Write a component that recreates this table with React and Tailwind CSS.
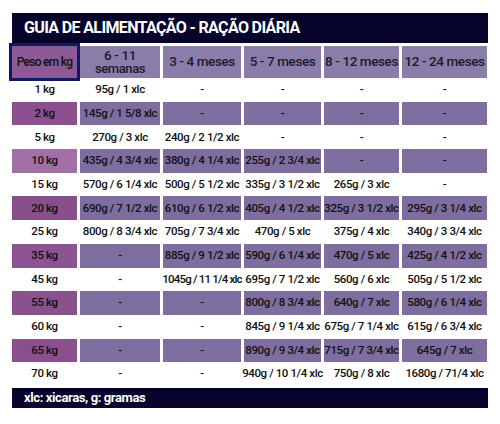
const headers = ["6 - 11", "3 - 4 meses", "5 - 7 meses", "8 - 12 meses", "12 - 24 meses"];

const rows = [
  { kg: "1 kg", cells: ["95g / 1 xlc", "-", "-", "-", "-"] },
  { kg: "2 kg", tint: "bg-[#8b4f8f]", cells: ["145g / 1 5/8 xlc", "-", "-", "-", "-"] },
  { kg: "5 kg", cells: ["270g / 3 xlc", "240g / 2 1/2 xlc", "-", "-", "-"] },
  { kg: "10 kg", tint: "bg-[#a270a7]", cells: ["435g / 4 3/4 xlc", "380g / 4 1/4 xlc", "255g / 2 3/4 xlc", "-", "-"] },
  { kg: "15 kg", cells: ["570g / 6 1/4 xlc", "500g / 5 1/2 xlc", "335g / 3 1/2 xlc", "265g / 3 xlc", "-"] },
  { kg: "20 kg", tint: "bg-[#894f8d]", cells: ["690g / 7 1/2 xlc", "610g / 6 1/2 xlc", "405g / 4 1/2 xlc", "325g / 3 1/2 xlc", "295g / 3 1/4 xlc"] },
  { kg: "25 kg", cells: ["800g / 8 3/4 xlc", "705g / 7 3/4 xlc", "470g / 5 xlc", "375g / 4 xlc", "340g / 3 3/4 xlc"] },
  { kg: "35 kg", tint: "bg-[#8b5391]", cells: ["-", "885g / 9 1/2 xlc", "590g / 6 1/4 xlc", "470g / 5 xlc", "425g / 4 1/2 xlc"] },
  { kg: "45 kg", cells: ["-", "1045g / 11 1/4 xlc", "695g / 7 1/2 xlc", "560g / 6 xlc", "505g / 5 1/2 xlc"] },
  { kg: "55 kg", tint: "bg-[#89528e]", cells: ["-", "-", "800g / 8 3/4 xlc", "640g / 7 xlc", "580g / 6 1/4 xlc"] },
  { kg: "60 kg", cells: ["-", "-", "845g / 9 1/4 xlc", "675g / 7 1/4 xlc", "615g / 6 3/4 xlc"] },
  { kg: "65 kg", tint: "bg-[#8a508d]", cells: ["-", "-", "890g / 9 3/4 xlc", "715g / 7 3/4 xlc", "645g / 7 xlc"] },
  { kg: "70 kg", cells: ["-", "-", "940g / 10 1/4 xlc", "750g / 8 xlc", "1680g / 71/4 xlc"] },
];

const font = { fontFamily: "Roboto, 'Open Sans', sans-serif" };

export default function App() {
  return (
    <div className="w-[500px] h-[424px] bg-white pt-[13px] pl-[12px]" style={font}>
      <div className="w-[476px] h-[30px] bg-[#06042a] flex items-center pl-[12px] text-white font-bold text-[16px] tracking-[-0.04em]">
        GUIA DE ALIMENTAÇÃO - RAÇÃO DIÁRIA
      </div>

      <div className="mt-[3px] grid grid-cols-[65px_80px_78px_77px_75px_85px] gap-x-[3px] text-[11.5px] font-medium tracking-[-0.035em] text-[#111]">
        <div className="h-[32px] bg-[#8e5a95] outline-[3px] outline-[#0c1a6b] flex items-center justify-center text-[12px] tracking-[-0.06em]">
          Peso em kg
        </div>
        {headers.map((h, i) => (
          <div key={h} className="h-[32px] bg-[#8a7daa] flex flex-col items-center justify-center text-[13.5px] leading-[13.5px] text-[#1a1a2a]">
            <span>{h}</span>
            {i === 0 && <span className="text-[13px]">semanas</span>}
          </div>
        ))}

        {rows.map((r) => (
          <Row key={r.kg} row={r} />
        ))}
      </div>

      <div className="mt-[2px] w-[476px] h-[20px] bg-[#06042a] flex items-center pl-[12px] text-white font-bold text-[13px] tracking-[-0.03em]">
        xlc: xicaras, g: gramas
      </div>
    </div>
  );
}

function Row({ row }) {
  const purple = Boolean(row.tint);
  return (
    <>
      <div className={`h-[23.7px] flex items-center justify-center ${purple ? row.tint : ""}`}>{row.kg}</div>
      {row.cells.map((c, i) => (
        <div
          key={i}
          className={`h-[23.7px] flex items-center justify-center whitespace-nowrap ${purple ? "bg-[#7d6e9f]" : ""} ${c.length > 17 ? "tracking-[-0.07em]" : ""}`}
        >
          {c}
        </div>
      ))}
    </>
  );
}
